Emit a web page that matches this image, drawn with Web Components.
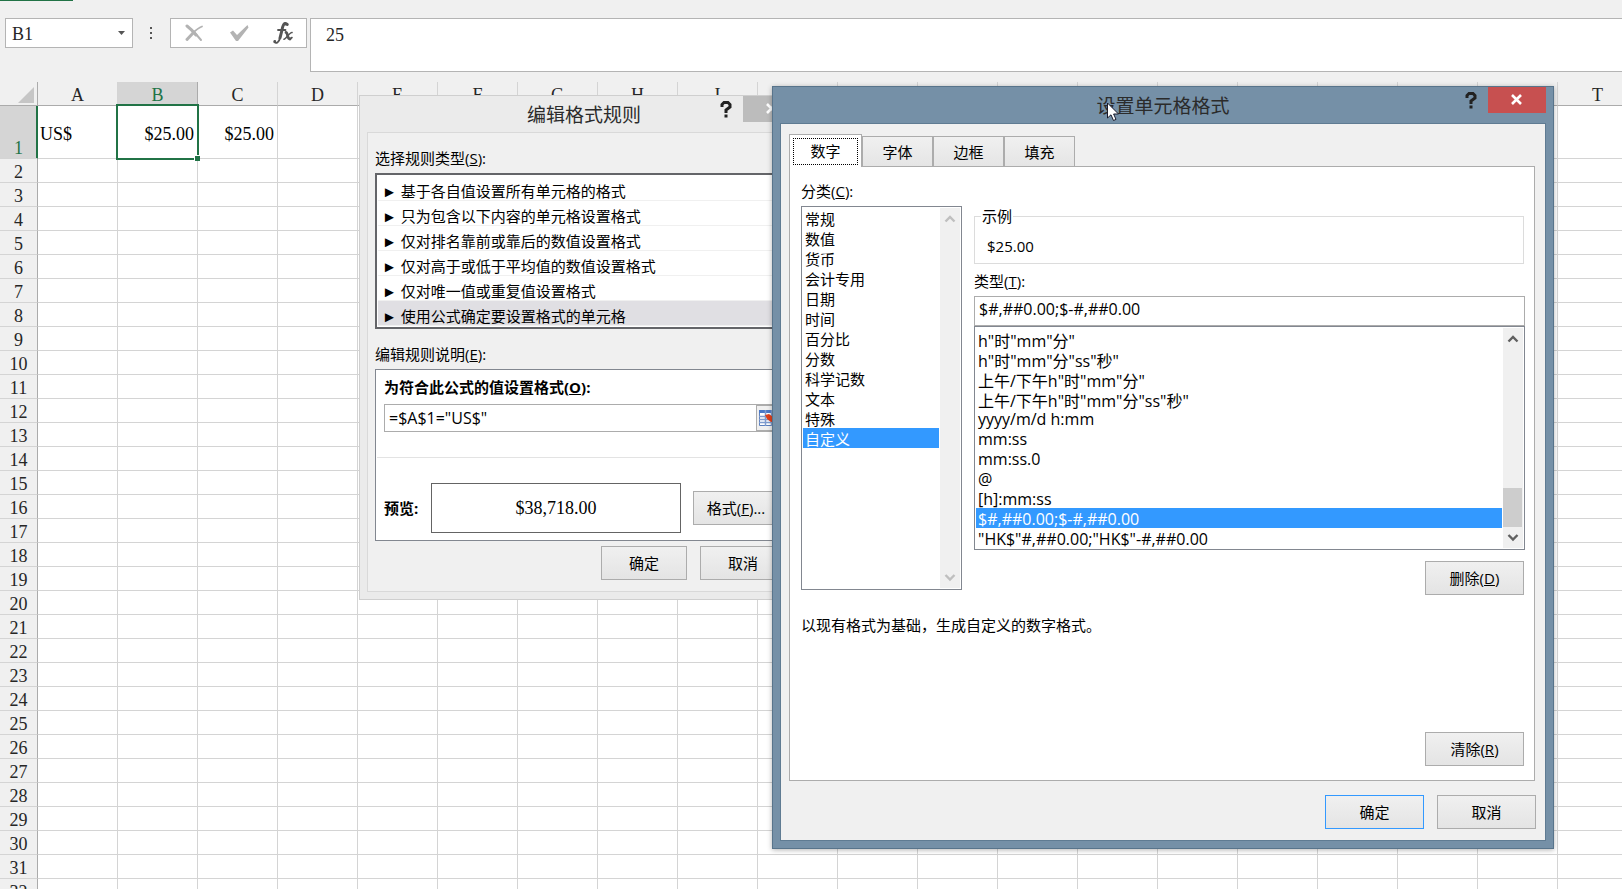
<!DOCTYPE html>
<html lang="zh-CN">
<head>
<meta charset="utf-8">
<title>Excel</title>
<style>
html, body {
    margin: 0;
    height: 100%;
}

body {
    overflow: hidden;
    background: #f0f0f0;
    color: #000;
    font: 15px/20px "Open Sans", "Noto Sans CJK SC", sans-serif;
}
</style>
</head>
<body>
<excel-window>
    <formula-bar cell="B1" value="25"></formula-bar>
    <sheet-grid></sheet-grid>
    <rule-dialog slot="dialogs"></rule-dialog>
    <format-dialog slot="dialogs"></format-dialog>
</excel-window>

<script>
function define(name, html, setup) {
    let template = document.createElement("template");
    template.innerHTML = html;

    window.customElements.define(name, class extends HTMLElement {
        constructor() {
            super();
            this.attachShadow({mode: "open"});
        }

        connectedCallback() {
            if (this.shadowRoot.childNodes.length > 0)
                return;

            this.shadowRoot.appendChild(template.content.cloneNode(true));

            if (setup)
                setup.call(this, this.shadowRoot);
        }
    });
}

define("push-button", `
<style>
:host {
    display: inline-flex;
    width: 99px;
    height: 34px;
}

button {
    flex: 1;
    padding: 0;
    border: 1px solid #acacac;
    background: linear-gradient(#f0f0f0, #e4e4e4);
    color: inherit;
    font: inherit;
    white-space: nowrap;
}

:host([default]) button {
    border-color: #3399ff;
}
</style>
<button type="button"><slot></slot></button>
`);

define("scroll-rail", `
<style>
:host {
    display: flex;
    flex-direction: column;
    width: 20px;
    background: #f0f0f0;
    color: #606060;
}

:host([disabled]) {
    color: #bfbfbf;
}

svg {
    width: 20px;
    height: 21px;
}

.track {
    flex: 1;
    display: flex;
    align-items: flex-end;
}

.thumb {
    display: none;
    width: 19px;
    height: 39px;
    background: #cdcdcd;
}

:host([thumb]) .thumb {
    display: block;
}
</style>
<svg viewBox="0 0 20 21" fill="none" stroke="currentColor" stroke-width="2.4"><path d="M5.500 13.500 L10 9 L14.500 13.500"/></svg>
<div class="track"><div class="thumb"></div></div>
<svg viewBox="0 0 20 21" fill="none" stroke="currentColor" stroke-width="2.4"><path d="M5.500 8 L10 12.500 L14.500 8"/></svg>
`);

define("list-box", `
<style>
:host {
    display: flex;
    padding: 1px;
    border: 1px solid #828790;
    background: #fff;
}

select {
    flex: 1;
    min-width: 0;
    margin: 0 1px 0 0;
    padding: 0;
    border: 0;
    border-radius: 0;
    outline: 0;
    overflow: hidden;
    background: #fff;
    color: #000;
    font: inherit;
    scrollbar-width: none;
}

option {
    box-sizing: border-box;
    height: 20px;
    min-height: 20px;
    padding: 0 2px;
    line-height: 18px;
}

option:checked {
    background: #3399ff linear-gradient(#3399ff, #3399ff);
    color: #fff;
}

:host([rules]) {
    border: 2px solid #646569;
}

:host([rules]) option {
    height: 25px;
    min-height: 25px;
    padding: 4px 4px 0;
    border-bottom: 1px solid #f0f0f0;
    line-height: 20px;
}

:host([rules]) option:checked {
    background: #e0dfe3 linear-gradient(#e0dfe3, #e0dfe3);
    color: #000;
}
</style>
<select></select>
`, function (root) {
    let select = root.querySelector("select");
    let items = JSON.parse(this.getAttribute("items"));
    select.size = items.length;
    select.setAttribute("aria-label", this.getAttribute("label"));

    for (let item of items) {
        let option = document.createElement("option");
        option.textContent = item;
        select.appendChild(option);
    }

    select.selectedIndex = Number(this.getAttribute("selected"));

    if (this.hasAttribute("scroll")) {
        let rail = document.createElement("scroll-rail");
        rail.toggleAttribute(this.getAttribute("scroll"), true);
        root.appendChild(rail);
    }
});

define("dialog-frame", `
<style>
:host {
    display: flex;
    flex-direction: column;
    box-sizing: border-box;
    padding: 0 7px 7px;
    border: 1px solid #cfcfcf;
    background: #ebebeb;
    --line: #d9d9d9;
    --close: #bcbcbc;
}

:host([active]) {
    border-color: #58748b;
    background: #7590a7;
    box-shadow: 0 1px 5px rgba(0, 0, 0, 0.3);
    --line: #5f7b92;
    --close: #c75050;
}

header {
    display: grid;
    grid-template-columns: 88px 1fr 88px;
    height: 36px;
}

h1 {
    grid-column: 2;
    margin: 0;
    color: #2b2b2b;
    font-size: 19px;
    font-weight: 400;
    line-height: 38px;
    text-align: center;
}

.tools {
    display: flex;
    justify-content: flex-end;
    align-items: flex-start;
}

.tools button {
    display: flex;
    padding: 0;
    border: 0;
    background: none;
}

.tools .close {
    background: var(--close);
}

.body {
    flex: 1;
    display: flex;
    flex-direction: column;
    border: 1px solid var(--line);
    background: #f0f0f0;
}
</style>
<header>
    <h1></h1>
    <div class="tools">
        <button type="button" aria-label="帮助"><svg width="30" height="26" viewBox="0 0 30 26" fill="none" stroke="#222" stroke-width="3"><path d="M9 11 V8.500 L11 6.500 H15 L17 8.500 V11 L13 14 V17 M13 18.500 V21.500"/></svg></button>
        <button type="button" class="close" aria-label="关闭"><svg width="58" height="26" viewBox="0 0 58 26" fill="none" stroke="#fff" stroke-width="2.600"><path d="M24 8 L33 17 M33 8 L24 17"/></svg></button>
    </div>
</header>
<div class="body"><slot></slot></div>
`, function (root) {
    root.querySelector("h1").textContent = this.getAttribute("heading");
});

define("tab-strip", `
<style>
:host {
    display: flex;
    align-items: flex-end;
}

button {
    box-sizing: border-box;
    width: 71px;
    height: 30px;
    padding: 0;
    border: 1px solid #acacac;
    border-bottom: 0;
    background: linear-gradient(#f0f0f0, #e5e5e5);
    color: inherit;
    font: inherit;
}

button[aria-selected=true] {
    z-index: 1;
    width: 73px;
    height: 33px;
    margin-bottom: -1px;
    padding: 3px;
    background: #fff;
}

button[aria-selected=true] span {
    display: block;
    height: 27px;
    box-sizing: border-box;
    border: 1px dotted #000;
    line-height: 24px;
}
</style>
<button type="button" role="tab" aria-selected="true"><span>数字</span></button>
<button type="button" role="tab">字体</button>
<button type="button" role="tab">边框</button>
<button type="button" role="tab">填充</button>
`);

define("rule-dialog", `
<style>
:host {
    display: block;
    width: 450px;
}

dialog-frame {
    min-height: 505px;
}

.content {
    padding: 15px 7px 11px;
}

label, .caption {
    display: block;
}

list-box {
    margin: 5px 0 15px;
}

.editor {
    box-sizing: border-box;
    height: 172px;
    margin-top: 5px;
    padding: 7px 0 0;
    border: 1px solid #828790;
    background: #fff;
}

.editor label, strong {
    font-weight: 700;
}

.formula {
    display: flex;
    align-items: center;
    box-sizing: border-box;
    height: 28px;
    margin-top: 7px;
    border: 1px solid #acacac;
}

.inset {
    padding: 0 8px;
}

input {
    flex: 1;
    min-width: 0;
    padding: 0 4px;
    border: 0;
    outline: 0;
    color: #000;
    font: inherit;
    font-size: 16px;
}

.formula button {
    display: flex;
    padding: 3px 5px 3px 2px;
    border: 1px solid #acacac;
    background: #f0f0f0;
}

hr {
    margin: 25px 1px 25px;
    border: 0;
    border-top: 1px solid #e3e3e3;
}

.preview {
    display: grid;
    grid-template-columns: 35px 250px 86px;
    align-items: center;
    gap: 12px;
}

output {
    box-sizing: border-box;
    height: 50px;
    border: 1px solid #646464;
    font: 18px/48px "Liberation Serif", serif;
    text-align: center;
}

footer {
    display: flex;
    justify-content: flex-end;
    gap: 13px;
    padding: 5px 7px 0 0;
}

push-button {
    width: 86px;
}
</style>
<dialog-frame heading="编辑格式规则">
    <div class="content">
        <div class="caption">选择规则类型(<u>S</u>):</div>
        <list-box rules label="选择规则类型" selected="5" items='["► 基于各自值设置所有单元格的格式", "► 只为包含以下内容的单元格设置格式", "► 仅对排名靠前或靠后的数值设置格式", "► 仅对高于或低于平均值的数值设置格式", "► 仅对唯一值或重复值设置格式", "► 使用公式确定要设置格式的单元格"]'></list-box>
        <div class="caption">编辑规则说明(<u>E</u>):</div>
        <div class="editor">
            <div class="inset">
                <label for="formula">为符合此公式的值设置格式(<u>O</u>):</label>
                <div class="formula">
                    <input id="formula" value='=$A$1="US$"'>
                    <button type="button" aria-label="选择单元格"><svg width="18" height="18" viewBox="0 0 18 18"><path fill="#fff" stroke="#5b7fbd" d="M.5 1.500 H17.500 V16.500 H.5 Z"/><path fill="#4a78c8" d="M0 1 H18 V4 H0 Z"/><path stroke="#7f9cce" stroke-width="1.500" d="M0 7.500 H18 M0 10.500 H18 M0 13.500 H18 M6.500 1 V17 M12.500 1 V17"/><path fill="#e0401c" d="M6 6 L10 5 L14 8 V5 L17 12 L12 13 L8 10 Z"/></svg></button>
                </div>
            </div>
            <hr>
            <div class="inset preview">
                <strong>预览:</strong>
                <output>$38,718.00</output>
                <push-button>格式(<u>F</u>)...</push-button>
            </div>
        </div>
        <footer>
            <push-button>确定</push-button>
            <push-button>取消</push-button>
        </footer>
    </div>
</dialog-frame>
`);

define("format-dialog", `
<style>
:host {
    display: block;
    width: 782px;
}

dialog-frame {
    min-height: 763px;
}

.content {
    flex: 1;
    display: flex;
    flex-direction: column;
    padding: 10px 9px 11px 8px;
}

.panel {
    flex: 1;
    display: flex;
    flex-direction: column;
    margin-right: 1px;
    padding: 14px 9px 14px 11px;
    border: 1px solid #acacac;
    background: #fff;
}

.columns {
    display: grid;
    grid-template-columns: 161px 1fr;
    gap: 12px;
}

.category {
    display: flex;
    flex-direction: column;
}

.category list-box {
    flex: 1;
    margin: 5px 0;
}

.type {
    display: flex;
    flex-direction: column;
}

fieldset {
    height: 58px;
    box-sizing: border-box;
    margin: 25px 1px 7px 0;
    padding: 10px 12px 0;
    border: 1px solid #dcdcdc;
}

legend {
    margin-left: -6px;
    padding: 0 1px;
}

input {
    box-sizing: border-box;
    height: 30px;
    margin-top: 5px;
    padding: 0 4px 4px;
    border: 1px solid #acacac;
    outline: 0;
    color: #000;
    font: inherit;
    font-size: 16px;
}

.type list-box {
    font-size: 16px;
}

push-button.side {
    align-self: flex-end;
    margin: 11px 1px 0 0;
}

p {
    margin: 20px 0 0;
}

.clear {
    display: flex;
    flex: 1;
    align-items: flex-end;
    justify-content: flex-end;
    padding-right: 1px;
}

footer {
    display: flex;
    justify-content: flex-end;
    gap: 13px;
    padding-top: 14px;
}
</style>
<dialog-frame active heading="设置单元格格式">
    <div class="content">
        <tab-strip></tab-strip>
        <div class="panel">
            <div class="columns">
                <div class="category">
                    <div>分类(<u>C</u>):</div>
                    <list-box label="分类" selected="11" scroll="disabled" items='["常规", "数值", "货币", "会计专用", "日期", "时间", "百分比", "分数", "科学记数", "文本", "特殊", "自定义"]'></list-box>
                </div>
                <div class="type">
                    <fieldset>
                        <legend>示例</legend>
                        <output>$25.00</output>
                    </fieldset>
                    <label for="type">类型(<u>T</u>):</label>
                    <input id="type" value="$#,##0.00;$-#,##0.00">
                    <list-box label="类型" selected="9" scroll="thumb" items='["h\\"时\\"mm\\"分\\"", "h\\"时\\"mm\\"分\\"ss\\"秒\\"", "上午/下午h\\"时\\"mm\\"分\\"", "上午/下午h\\"时\\"mm\\"分\\"ss\\"秒\\"", "yyyy/m/d h:mm", "mm:ss", "mm:ss.0", "@", "[h]:mm:ss", "$#,##0.00;$-#,##0.00", "\\"HK$\\"#,##0.00;\\"HK$\\"-#,##0.00"]'></list-box>
                    <push-button class="side">删除(<u>D</u>)</push-button>
                </div>
            </div>
            <p>以现有格式为基础，生成自定义的数字格式。</p>
            <div class="clear"><push-button>清除(<u>R</u>)</push-button></div>
        </div>
        <footer>
            <push-button default>确定</push-button>
            <push-button>取消</push-button>
        </footer>
    </div>
</dialog-frame>
`);

define("formula-bar", `
<style>
:host {
    display: flex;
    align-items: flex-start;
    height: 64px;
    padding: 18px 0 0 5px;
    color: #262626;
    font: 18px/28px "Liberation Serif", serif;
}

.name, .actions {
    display: flex;
    align-items: center;
    box-sizing: border-box;
    height: 30px;
    border: 1px solid #b4b4b4;
    background: #fff;
}

.name {
    width: 128px;
    padding-right: 7px;
}

input, textarea {
    box-sizing: border-box;
    border: 0;
    outline: 0;
    background: none;
    color: inherit;
    font: inherit;
}

.name input {
    flex: 1;
    min-width: 0;
    padding: 2px 6px 0;
}

.dots {
    margin: 8px 17px 0 16px;
}

.actions {
    width: 137px;
    justify-content: space-between;
    padding: 0 12px;
}

.actions button {
    display: flex;
    padding: 0;
    border: 0;
    background: none;
}

textarea {
    flex: 1;
    height: 54px;
    margin-left: 3px;
    padding: 2px 15px;
    border: 1px solid #b4b4b4;
    border-right: 0;
    background: #fff;
    resize: none;
    overflow: hidden;
}
</style>
<div class="name">
    <input aria-label="名称框">
    <svg width="7" height="4" viewBox="0 0 7 4"><path fill="#555" d="M0 0 H7 L3.500 4 Z"/></svg>
</div>
<svg class="dots" width="4" height="14" viewBox="0 0 4 14"><path fill="#555" d="M1 1 H3 V3 H1 Z M1 6 H3 V8 H1 Z M1 11 H3 V13 H1 Z"/></svg>
<div class="actions">
    <button type="button" aria-label="取消"><svg width="22" height="22" viewBox="0 0 22 22" fill="none" stroke="#b3b3b3" stroke-linecap="round"><path stroke-width="3" d="M4 4 C8 7 10 9 13 13"/><path stroke-width="2" d="M12 11 L18 18"/><path stroke-width="1.800" d="M19 4.500 C15 6 12 9 10 11"/><path stroke-width="3" d="M11 10 L4 17.500"/></svg></button>
    <button type="button" aria-label="输入"><svg width="22" height="22" viewBox="0 0 22 22"><path fill="#b3b3b3" d="M2 10.500 L5 8.500 L9 13 L19.500 3 L20.500 5.500 L10 19 H8 Z"/></svg></button>
    <button type="button" aria-label="插入函数"><svg width="22" height="24" viewBox="0 0 22 24" fill="none" stroke="#555" stroke-linecap="round"><path stroke-width="3" d="M13 3 C11 3 10.500 6 10 9 L8 17"/><path stroke-width="1.800" d="M15.500 3.500 C14.500 1.500 12.500 1.500 11.500 3 M8 17 C7 21.500 4 23 2.500 21"/><path stroke-width="2.800" d="M15.200 3.300 V3.500 M2.800 20.500 V20.700"/><path stroke-width="1.800" d="M6 9 H13.500"/><path stroke-width="2.800" d="M14 11.500 C16 11.500 15 18 18 18"/><path stroke-width="1.600" d="M20 11.500 C18 11 14 18 12 18.300 M18 18 L20 16.500"/></svg></button>
</div>
<textarea aria-label="编辑栏"></textarea>
`, function (root) {
    root.querySelector("input").value = this.getAttribute("cell");
    root.querySelector("textarea").value = this.getAttribute("value");
});

define("sheet-grid", `
<style>
:host {
    display: block;
    font: 18px/22px "Liberation Serif", serif;
}

table {
    width: max-content;
    border-collapse: separate;
    border-spacing: 0;
    table-layout: fixed;
    background: #fff;
}

col {
    width: 80px;
}

col:first-child {
    width: 38px;
}

th, td {
    box-sizing: border-box;
    height: 24px;
    padding: 0 2px;
    border: solid #d4d4d4;
    border-width: 0 1px 1px 0;
    white-space: nowrap;
}

th {
    padding: 3px 0 0;
    background: #f0f0f0;
    color: #262626;
    font-weight: 400;
    line-height: 20px;
}

thead th {
    border-bottom-color: #ababab;
}

th:first-child {
    border-right-color: #ababab;
}

tbody tr:first-child > * {
    height: 53px;
}

tbody tr:first-child th {
    vertical-align: bottom;
}

.current {
    background: #d5d5d5;
    color: #217346;
}

tbody .current {
    box-shadow: inset -1px 0 #217346;
    border-right-color: #217346;
}

thead .current {
    border-right-color: #ababab;
}

.text {
    padding-top: 3px;
}

.number {
    padding-right: 3px;
    text-align: right;
}

.active {
    position: relative;
}

/* selection frame and its fill handle */
.active::before {
    content: "";
    position: absolute;
    inset: -2px;
    border: 2px solid #217346;
}

.active::after {
    content: "";
    position: absolute;
    right: -3px;
    bottom: -3px;
    width: 5px;
    height: 5px;
    border: 1px solid #fff;
    border-width: 1px 0 0 1px;
    background: #217346;
}

svg {
    display: block;
    margin: 0 3px 0 auto;
}
</style>
<table>
    <colgroup><col></colgroup>
    <thead><tr><th><svg width="16" height="16" viewBox="0 0 16 16"><path fill="#c6c6c6" d="M16 0 V16 H0 Z"/></svg></th></tr></thead>
    <tbody></tbody>
</table>
`, function (root) {
    // just enough columns and rows to fill the window
    let count = Math.min(26, Math.ceil((window.innerWidth - 38) / 80));
    let rows = Math.ceil((window.innerHeight - 159) / 24) + 1;
    let columns = [..."ABCDEFGHIJKLMNOPQRSTUVWXYZ"].slice(0, count);
    let values = {A1: "US$", B1: "$25.00", C1: "$25.00"};
    let group = root.querySelector("colgroup");
    let head = root.querySelector("thead tr");
    let body = root.querySelector("tbody");

    root.querySelector("table").style.width = 38 + count * 80 + "px";

    for (let name of columns) {
        let th = document.createElement("th");
        th.textContent = name;
        th.classList.toggle("current", name === "B");
        head.appendChild(th);
        group.appendChild(document.createElement("col"));
    }

    for (let i = 1; i <= rows; i++) {
        let row = document.createElement("tr");
        let th = document.createElement("th");
        th.textContent = i;
        th.classList.toggle("current", i === 1);
        row.appendChild(th);

        for (let name of columns) {
            let value = values[name + i];
            let td = row.insertCell();

            if (value) {
                td.textContent = value;
                td.classList.add("text");
                td.classList.toggle("number", value.startsWith("$"));
                td.classList.toggle("active", name === "B");
            }
        }

        body.appendChild(row);
    }
});

define("excel-window", `
<style>
:host {
    display: block;
    position: relative;
    height: 100vh;
    overflow: hidden;
}

.tab {
    position: absolute;
    top: 0;
    left: 0;
    width: 73px;
    height: 1px;
    background: #217346;
}

::slotted(rule-dialog) {
    position: absolute;
    top: 95px;
    left: 359px;
}

::slotted(format-dialog) {
    position: absolute;
    top: 86px;
    left: 772px;
}

.pointer {
    position: absolute;
    top: 102px;
    left: 1107px;
}
</style>
<div class="tab"></div>
<slot></slot>
<slot name="dialogs"></slot>
<svg class="pointer" width="13" height="20" viewBox="0 0 13 20"><path fill="#fff" stroke="#1b1b2b" d="M.5 1 V16 L4 12.800 L6.500 18.500 L9 17.400 L6.600 12 H11.500 Z"/></svg>
`);
</script>
</body>
</html>
